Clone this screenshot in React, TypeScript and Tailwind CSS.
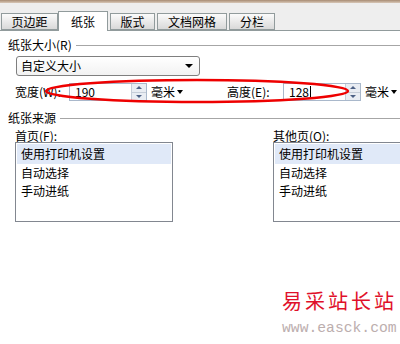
import type { ReactNode } from 'react';

const ui = "font-['Noto_Sans_CJK_SC','Liberation_Sans',sans-serif]";

function Tab({ label, width, active }: { label: string; width: string; active?: boolean }) {
  if (active) {
    return (
      <div
        className={`${width} h-[20px] -mb-px flex items-center justify-center border border-b-0 border-[#919b9c] bg-white text-[12px] leading-none text-black`}
      >
        {label}
      </div>
    );
  }
  return (
    <div
      className={`${width} h-[17px] flex items-center justify-center border border-[#919b9c] bg-gradient-to-b from-[#fbfbfb] to-[#d9d9d9] text-[12px] leading-none text-black`}
    >
      {label}
    </div>
  );
}

function GroupTitle({ children }: { children: ReactNode }) {
  return (
    <div className="flex h-[14px] items-center pl-[8px]">
      <span className="text-[12px] leading-none">{children}</span>
      <div className="ml-[4px] h-px flex-1 bg-[#a6a6a6]" />
    </div>
  );
}

function Caret() {
  return (
    <span className="ml-[2px] inline-block h-0 w-0 border-x-[3px] border-t-[4px] border-x-transparent border-t-black" />
  );
}

function Spinner() {
  return (
    <div className="flex h-full w-[15px] flex-col border-l border-[#c5cdd8] bg-[#e9edf3]">
      <div className="flex flex-1 items-center justify-center border-b border-[#c5cdd8]">
        <span className="h-0 w-0 border-x-[3px] border-b-[3px] border-x-transparent border-b-[#4d6185]" />
      </div>
      <div className="flex flex-1 items-center justify-center">
        <span className="h-0 w-0 border-x-[3px] border-t-[3px] border-x-transparent border-t-[#4d6185]" />
      </div>
    </div>
  );
}

function SizeInput({ value, cursor }: { value: string; cursor?: boolean }) {
  return (
    <div className="flex h-[18px] w-[78px] items-stretch border border-[#a9b8cb] bg-white">
      <div className="flex flex-1 items-center pl-[5px] text-[12px] leading-none">
        {value}
        {cursor && <span className="ml-px inline-block h-[12px] w-px bg-black" />}
      </div>
      <Spinner />
    </div>
  );
}

function Listbox({ width }: { width: string }) {
  const items = ['使用打印机设置', '自动选择', '手动进纸'];
  return (
    <div className={`${width} h-[80px] border border-[#828790] bg-white p-px`}>
      {items.map((item, i) => (
        <div
          key={item}
          className={`flex items-center pl-[4px] text-[12px] leading-none ${i === 0 ? 'h-[20px] bg-[#e0e9f8]' : 'h-[18px]'}`}
        >
          {item}
        </div>
      ))}
    </div>
  );
}

export default function App() {
  return (
    <div className={`relative h-[344px] w-[400px] overflow-hidden bg-white text-black ${ui}`}>
      <div className="h-[3px] bg-gradient-to-b from-[#a88c74] to-[#d8c8b8]" />

      {/* tab strip */}
      <div className="flex h-[28px] items-end border-b border-[#919b9c] bg-[#eeeeee] pl-[1px]">
        <Tab label="页边距" width="w-[57px]" />
        <Tab label="纸张" width="w-[50px]" active />
        <div className="w-[2px]" />
        <Tab label="版式" width="w-[45px]" />
        <div className="w-[2px]" />
        <Tab label="文档网格" width="w-[70px]" />
        <div className="w-[2px]" />
        <Tab label="分栏" width="w-[46px]" />
      </div>

      <div className="flex flex-col">
        <div className="mt-[7px]">
          <GroupTitle>纸张大小(R)</GroupTitle>
        </div>

        <div className="ml-[16px] mt-[4px] flex h-[20px] w-[184px] items-center justify-between rounded-[3px] border border-[#7f7f7f] bg-gradient-to-b from-white to-[#f2f2f2] pl-[4px] pr-[6px]">
          <span className="text-[12px] leading-none">自定义大小</span>
          <span className="h-0 w-0 border-x-[4px] border-t-[4px] border-x-transparent border-t-black" />
        </div>

        <div className="mt-[7px] flex h-[18px] items-center pl-[15px]">
          <span className="w-[54px] text-[12px] leading-none">宽度(W):</span>
          <SizeInput value="190" />
          <span className="ml-[4px] flex items-center text-[12px] leading-none">
            毫米
            <Caret />
          </span>
          <span className="ml-[44px] w-[56px] text-[12px] leading-none">高度(E):</span>
          <SizeInput value="128" cursor />
          <span className="ml-[4px] flex items-center text-[12px] leading-none">
            毫米
            <Caret />
          </span>
        </div>

        <div className="mt-[10px]">
          <GroupTitle>纸张来源</GroupTitle>
        </div>

        <div className="mt-[5px] flex pl-[15px]">
          <div className="flex flex-col">
            <span className="h-[12px] text-[12px] leading-[12px]">首页(F):</span>
            <Listbox width="w-[158px]" />
          </div>
          <div className="ml-[100px] flex flex-col">
            <span className="h-[12px] text-[12px] leading-[12px]">其他页(O):</span>
            <Listbox width="w-[140px]" />
          </div>
        </div>
      </div>

      {/* red annotation ellipse */}
      <svg className="pointer-events-none absolute left-0 top-0" width="400" height="344">
        <ellipse cx="197" cy="91" rx="151" ry="11" fill="none" stroke="#ee0000" strokeWidth="2.5" />
      </svg>

      {/* watermark */}
      <div className="absolute left-[282px] top-[289px] flex flex-col items-start whitespace-nowrap">
        <span className="text-[20px] leading-[24px] tracking-[3px] text-[#e0102a]">易采站长站</span>
        <span className="mt-[7px] font-['Liberation_Mono',monospace] text-[14.7px] leading-[16px] text-[#bcaeae]">
          www.easck.com
        </span>
      </div>
    </div>
  );
}
